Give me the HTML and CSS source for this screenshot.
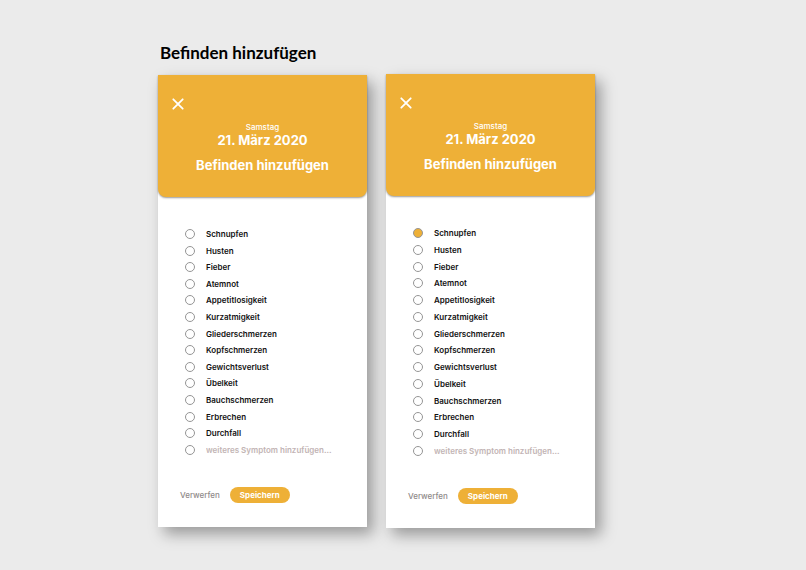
FILE: index.html
```
<!DOCTYPE html>
<html lang="de">
<head>
    <meta charset="UTF-8">
    <meta name="viewport" content="width=device-width, initial-scale=1.0">
    <title>Befinden hinzufügen</title>
    <link rel="stylesheet" href="styles.css">
</head>
<body>

    <main class="board">
        <h1>Befinden hinzufügen</h1>

        <div class="screens">
            <!-- Leeres Formular -->
            <form class="screen">
                <header class="top">
                    <button type="button" class="close" aria-label="Schließen">
                        <svg viewBox="0 0 12 12"><path d="M1.3 1.3 L10.7 10.7 M10.7 1.3 L1.3 10.7"/></svg>
                    </button>
                    <p class="day">Samstag</p>
                    <p class="date">21. März 2020</p>
                    <h2>Befinden hinzufügen</h2>
                </header>
                <ul class="symptoms">
                    <li><label><input type="checkbox">Schnupfen</label></li>
                    <li><label><input type="checkbox">Husten</label></li>
                    <li><label><input type="checkbox">Fieber</label></li>
                    <li><label><input type="checkbox">Atemnot</label></li>
                    <li><label><input type="checkbox">Appetitlosigkeit</label></li>
                    <li><label><input type="checkbox">Kurzatmigkeit</label></li>
                    <li><label><input type="checkbox">Gliederschmerzen</label></li>
                    <li><label><input type="checkbox">Kopfschmerzen</label></li>
                    <li><label><input type="checkbox">Gewichtsverlust</label></li>
                    <li><label><input type="checkbox">Übelkeit</label></li>
                    <li><label><input type="checkbox">Bauchschmerzen</label></li>
                    <li><label><input type="checkbox">Erbrechen</label></li>
                    <li><label><input type="checkbox">Durchfall</label></li>
                    <li><input type="checkbox" aria-label="weiteres Symptom"><input type="text" class="more" aria-label="weiteres Symptom hinzufügen" placeholder="weiteres Symptom hinzufügen..."></li>
                </ul>
                <footer class="actions">
                    <button type="reset" class="discard">Verwerfen</button>
                    <button type="button" class="save">Speichern</button>
                </footer>
            </form>

            <!-- Schnupfen ausgewählt -->
            <form class="screen selected">
                <header class="top">
                    <button type="button" class="close" aria-label="Schließen">
                        <svg viewBox="0 0 12 12"><path d="M1.3 1.3 L10.7 10.7 M10.7 1.3 L1.3 10.7"/></svg>
                    </button>
                    <p class="day">Samstag</p>
                    <p class="date">21. März 2020</p>
                    <h2>Befinden hinzufügen</h2>
                </header>
                <ul class="symptoms">
                    <li><label><input type="checkbox" checked>Schnupfen</label></li>
                    <li><label><input type="checkbox">Husten</label></li>
                    <li><label><input type="checkbox">Fieber</label></li>
                    <li><label><input type="checkbox">Atemnot</label></li>
                    <li><label><input type="checkbox">Appetitlosigkeit</label></li>
                    <li><label><input type="checkbox">Kurzatmigkeit</label></li>
                    <li><label><input type="checkbox">Gliederschmerzen</label></li>
                    <li><label><input type="checkbox">Kopfschmerzen</label></li>
                    <li><label><input type="checkbox">Gewichtsverlust</label></li>
                    <li><label><input type="checkbox">Übelkeit</label></li>
                    <li><label><input type="checkbox">Bauchschmerzen</label></li>
                    <li><label><input type="checkbox">Erbrechen</label></li>
                    <li><label><input type="checkbox">Durchfall</label></li>
                    <li><input type="checkbox" aria-label="weiteres Symptom"><input type="text" class="more" aria-label="weiteres Symptom hinzufügen" placeholder="weiteres Symptom hinzufügen..."></li>
                </ul>
                <footer class="actions">
                    <button type="reset" class="discard">Verwerfen</button>
                    <button type="button" class="save">Speichern</button>
                </footer>
            </form>
        </div>
    </main>

</body>
</html>
```
FILE: styles.css
```
* {
    box-sizing: border-box;
}
body {
    margin: 0;
    background-color: #ebebeb;
    font-family: Inter, "Liberation Sans", sans-serif;
    font-size: 8px;
    color: #111;
}
h1, h2, p, ul {
    margin: 0;
    padding: 0;
}
button {
    font-family: inherit;
    font-size: 8px;
    border: none;
    background: none;
    padding: 0;
    cursor: pointer;
}
.board {
    max-width: 437px;
    margin: 0 auto 0 158px;
    padding: 42px 0;
}
h1 {
    padding-left: 2px;
    font-family: Lato, "Open Sans", sans-serif;
    font-size: 17px;
    font-weight: 700;
    line-height: 22px;
    color: #000;
}
.screens {
    display: flex;
    align-items: center;
    gap: 19px;
    padding-top: 10px;
}
.screen {
    flex: 1;
    display: flex;
    flex-direction: column;
    min-height: 452px;
    background-color: white;
    box-shadow: 6px 7px 14px rgba(0, 0, 0, 0.35);
}
.screen.selected {
    min-height: 454px;
}
.top {
    position: relative;
    padding: 47px 0 23px;
    background-color: #eeb037;
    border-radius: 0 0 8px 8px;
    box-shadow: 0 1px 2px rgba(0, 0, 0, 0.4);
    color: white;
    text-align: center;
}
.close {
    position: absolute;
    top: 23px;
    left: 14px;
    width: 12px;
    height: 12px;
}
.close svg {
    display: block;
    fill: none;
    stroke: white;
    stroke-width: 1.8;
    stroke-linecap: round;
}
.day {
    font-weight: 500;
    line-height: 10px;
}
.date {
    font-size: 13px;
    font-weight: 700;
    line-height: 16px;
}
h2 {
    padding-top: 8px;
    font-size: 13px;
    font-weight: 700;
    line-height: 18px;
}
.symptoms {
    flex: 1;
    display: flex;
    flex-direction: column;
    justify-content: space-between;
    padding: 30px 28px 0 27px;
    list-style: none;
    font-weight: 600;
}
.symptoms li, .symptoms label {
    display: flex;
    align-items: center;
    height: 14px;
}
input[type="checkbox"] {
    appearance: none;
    flex: none;
    width: 10px;
    height: 10px;
    margin: 0 11px 0 0;
    border: 1px solid #959595;
    border-radius: 50%;
    background-color: white;
}
input[type="checkbox"]:checked {
    background-color: #eeb037;
}
.more {
    flex: 1;
    min-width: 0;
    padding: 0;
    border: none;
    background: none;
    font-family: inherit;
    font-size: 8px;
    font-weight: 600;
}
.more::placeholder {
    color: #c2b4b4;
}
.actions {
    display: flex;
    align-items: center;
    gap: 10px;
    padding: 30px 22px 24px;
}
.discard {
    color: #8f8a8a;
    font-weight: 500;
}
.save {
    padding: 0 10px;
    line-height: 16px;
    border-radius: 8px;
    background-color: #eeb037;
    color: white;
    font-weight: 700;
}
```
